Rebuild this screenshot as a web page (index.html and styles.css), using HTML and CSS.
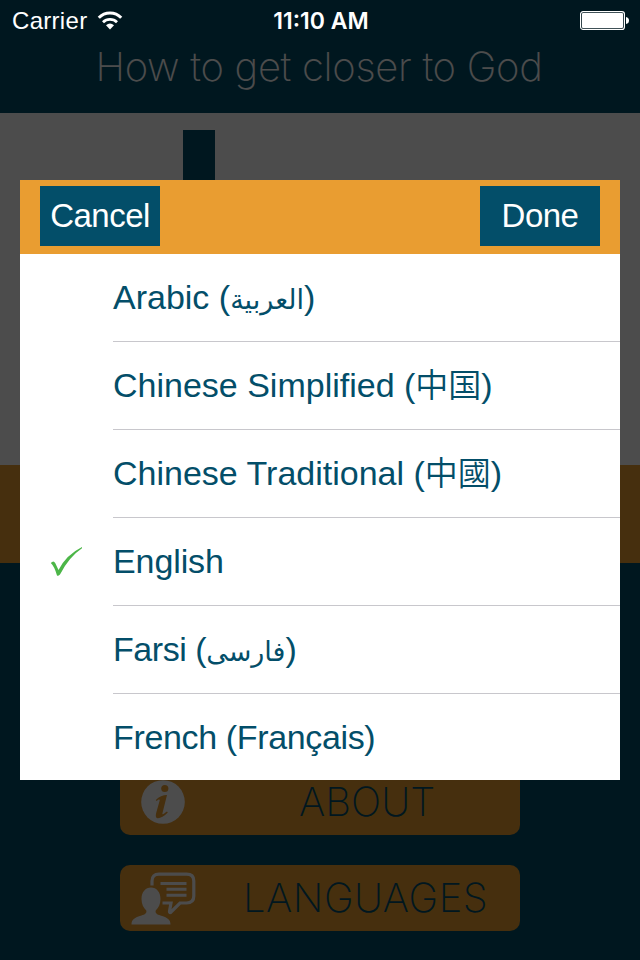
FILE: index.html
```html
<!DOCTYPE html>
<html lang="en">
<head>
  <meta charset="UTF-8">
  <title>How to get closer to God</title>
  <link rel="stylesheet" href="styles.css">
</head>
<body>
  <div class="screen">
    <header class="header">
      <h1>How to get closer to God</h1>
    </header>
    <div class="hero">
      <div class="cross"></div>
    </div>
    <div class="banner"></div>
    <nav class="menu">
      <a class="menu-btn">
        <svg class="menu-icon info" viewBox="0 0 44 44" width="44" height="44">
          <circle cx="22" cy="22" r="21.8" fill="#fff"/>
          <circle cx="23.8" cy="8.500" r="3.6" fill="#e99d31"/>
          <path d="M14.800 20 C18 16.500 22 15 26 15 L21.500 33 C21 35.500 22.500 34 26 31.500 L26.800 32.500 C23 36.500 19 38.500 16.500 38.200 C14.500 37.800 14.600 35 15.300 32.500 L18.700 20.500 C19 18.800 17 19.500 15.500 21 Z" fill="#e99d31"/>
        </svg>
        <span class="about-text">ABOUT</span>
      </a>
      <a class="menu-btn">
        <svg class="menu-icon people" viewBox="0 0 66 54" width="67" height="54">
          <path d="M21.500 13.500 V9 Q21.500 2.200 28.500 2.200 H56 Q63.300 2.200 63.300 9 V24 Q63.300 31 56 31 H49.500 L40 40.500 Q39 40.800 39 39.500 L40.500 31 H32" fill="none" stroke="#fff" stroke-width="3.200"/>
          <path d="M30 11.400 H56 M36 17.300 H56 M36 23.300 H56" stroke="#fff" stroke-width="3"/>
          <path d="M20.500 15.500 C26 15.500 30 20 30 27 C30 32 28 36 25.200 38.500 C24.500 41 26.500 42.500 30 43.500 C37 45.500 40 47.500 40 52.500 H1 C1 47.500 4 45.500 11 43.500 C14.500 42.500 16.500 41 15.800 38.500 C13 36 11 32 11 27 C11 20 15 15.500 20.500 15.500 Z" fill="#fff"/>
        </svg>
        <span class="lang-text">LANGUAGES</span>
      </a>
    </nav>
  </div>

  <div class="overlay">
    <div class="status">
      <div class="carrier">
        <span>Carrier</span>
        <svg viewBox="0 0 26 20" width="26" height="20">
          <path d="M1.800 6.700 A15.500 15.500 0 0 1 24.200 6.700" fill="none" stroke="#fff" stroke-width="3"/>
          <path d="M6 11.200 A10 10 0 0 1 20 11.200" fill="none" stroke="#fff" stroke-width="2.800"/>
          <path d="M9 14.200 Q13 11 17 14.200 L13 18.500 Z" fill="#fff"/>
        </svg>
      </div>
      <span class="time">11:10 AM</span>
      <svg class="battery" viewBox="0 0 50 20" width="50" height="20">
        <rect x=".6" y=".6" width="43.800" height="17.800" rx="2.500" fill="none" stroke="#fff" stroke-width="1.200"/>
        <rect x="2" y="2" width="41" height="15" rx="1" fill="#fff"/>
        <path d="M46 6 Q49 6.500 49 9.500 Q49 12.500 46 13 Z" fill="#fff"/>
      </svg>
    </div>

    <div class="dialog">
      <div class="toolbar">
        <button class="btn-cancel">Cancel</button>
        <button class="btn-done">Done</button>
      </div>
      <ul class="languages">
        <li><span class="check"></span><span class="name arabic">Arabic (<bdi>العربية</bdi>)</span></li>
        <li><span class="check"></span><span class="name simplified">Chinese Simplified (<i lang="zh-CN">中国</i>)</span></li>
        <li><span class="check"></span><span class="name traditional">Chinese Traditional (<i lang="zh-TW">中國</i>)</span></li>
        <li>
          <span class="check">
            <svg viewBox="0 0 34 32" width="34" height="32">
              <path d="M.8 17 Q3.500 14 5.200 17 L8.500 24 Q16 9 32 1 V2.300 Q19 11 10 28.500 Q8 30.500 7 29.500 Q4.500 20.500 .8 17 Z" fill="#4cb648"/>
            </svg>
          </span>
          <span class="name english">English</span>
        </li>
        <li><span class="check"></span><span class="name farsi">Farsi (<bdi>فارسی</bdi>)</span></li>
        <li><span class="check"></span><span class="name french">French (Français)</span></li>
      </ul>
    </div>
  </div>
</body>
</html>
```

FILE: styles.css
```css
* {
  box-sizing: border-box;
}

body {
  margin: 0;
  width: 640px;
  height: 960px;
  overflow: hidden;
  position: relative;
  font-family: "Liberation Sans", "Noto Sans CJK SC", sans-serif;
}

.screen {
  height: 960px;
  display: flex;
  flex-direction: column;
  background: #034e69;
}

.header {
  height: 113px;
  padding: 43px 2px 0 0;
  text-align: center;
}

h1 {
  margin: 0;
  font-family: Inter, sans-serif;
  font-size: 40px;
  line-height: 48px;
  font-weight: 250;
  letter-spacing: -0.3px;
  color: #fff;
  white-space: nowrap;
}

.hero {
  height: 352px;
  padding: 17px 0 0 183px;
  background: #fff;
}

.cross {
  width: 32px;
  height: 200px;
  background: #034e69;
}

.banner {
  height: 98px;
  background: #e99d31;
}

.menu {
  flex: 1;
  display: flex;
  flex-direction: column;
  justify-content: flex-end;
  align-items: center;
  gap: 30px;
  padding-bottom: 29px;
}

.menu-btn {
  width: 400px;
  height: 66px;
  display: flex;
  align-items: center;
  border-radius: 10px;
  background: #e99d31;
  color: #034e69;
  font-family: Inter, sans-serif;
  font-size: 40px;
  font-weight: 250;
  line-height: 46px;
  padding-bottom: 1px;
}

.info {
  margin: 1px 114px 0 21px;
}

.people {
  margin: 3px 46px 0 10px;
}

.lang-text {
  letter-spacing: 0.5px;
}

.overlay {
  position: absolute;
  inset: 0;
  background: rgba(0, 0, 0, 0.7);
}

.status {
  height: 40px;
  display: grid;
  grid-template-columns: 1fr auto 1fr;
  align-items: center;
  padding: 2px 10px 0 12px;
  color: #fff;
  font-size: 24px;
}

.carrier {
  display: flex;
  align-items: center;
  gap: 10px;
  letter-spacing: 0.3px;
}

.time {
  font-family: Inter, sans-serif;
  font-size: 23px;
  font-weight: 600;
}

.battery {
  justify-self: end;
}

.dialog {
  width: 600px;
  height: 600px;
  margin: 140px 20px 0;
  overflow: hidden;
  background: #fff;
}

.toolbar {
  height: 74px;
  display: flex;
  justify-content: space-between;
  padding: 6px 20px 8px;
  background: #e99d31;
}

button {
  width: 120px;
  height: 60px;
  padding: 0;
  border: none;
  border-radius: 0;
  background: #034e69;
  color: #fff;
  font-family: "Liberation Sans", sans-serif;
  font-size: 33px;
  letter-spacing: -0.5px;
}

.languages {
  list-style: none;
  margin: 0;
  padding: 0;
}

li {
  height: 88px;
  display: flex;
  color: #034e69;
  font-size: 34px;
}

.check {
  width: 93px;
  padding: 28px 0 0 30px;
}

.name {
  flex: 1;
  line-height: 87px;
  border-bottom: 1px solid #c8c7cc;
  white-space: nowrap;
}

.english {
  letter-spacing: -0.1px;
}

.farsi {
  letter-spacing: -0.45px;
}

.french {
  letter-spacing: -0.35px;
}

i {
  font-style: normal;
  font-size: 33px;
  font-weight: 350;
  line-height: 1;
  letter-spacing: 0;
}

i[lang="zh-CN"] {
  font-family: "Noto Sans CJK SC", sans-serif;
}

i[lang="zh-TW"] {
  font-family: "Noto Sans CJK TC", sans-serif;
}

bdi {
  font-family: "DejaVu Sans", sans-serif;
  font-size: 27px;
  line-height: 1;
  letter-spacing: 0;
}
```
